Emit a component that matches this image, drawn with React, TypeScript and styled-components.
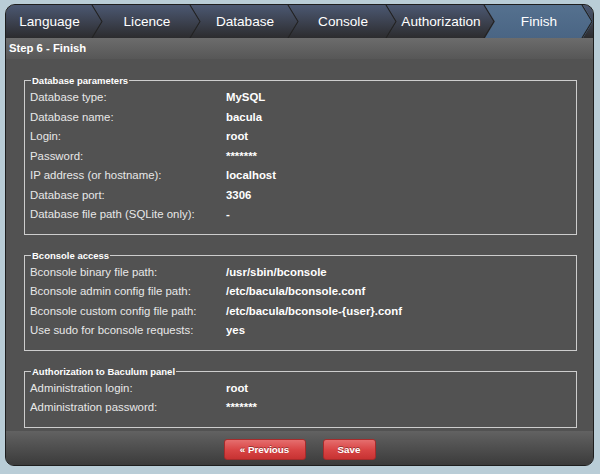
import React from "react";
import styled, { createGlobalStyle, css } from "styled-components";

const Global = createGlobalStyle`
  html, body { margin: 0; padding: 0; background: #b9cdd7; }
  body { font-family: "Liberation Sans", Arial, sans-serif; }
`;

const Page = styled.div`
  padding: 4px 6px 8px 5px;
`;

const Panel = styled.div`
  width: 589px;
  box-sizing: border-box;
  border: 1px solid #1e1e1e;
  border-radius: 10px 10px 9px 9px;
  overflow: hidden;
  background: #525252;
  display: flex;
  flex-direction: column;
`;

const TabBar = styled.div`
  display: flex;
  height: 33px;
  background: linear-gradient(#4b5872, #3b404d 55%, #2c2c2e);
`;

const Tab = styled.div<{ $first?: boolean; $active?: boolean }>`
  position: relative;
  flex: 0 0 ${(p) => (p.$first ? 97 : 108)}px;
  margin-right: -10px;
  box-sizing: border-box;
  padding-right: ${(p) => (p.$first ? 10 : 0)}px;
  display: flex;
  align-items: center;
  justify-content: center;
  color: #fff;
  font-size: 13.6px;
  clip-path: ${(p) =>
    p.$first
      ? "polygon(0 0, calc(100% - 10px) 0, 100% 50%, calc(100% - 10px) 100%, 0 100%)"
      : "polygon(0 0, calc(100% - 10px) 0, 100% 50%, calc(100% - 10px) 100%, 0 100%, 10px 50%)"};
  ${(p) =>
    p.$active &&
    css`
      background: linear-gradient(#55718f, #4a6584);
    `}
`;

const Separator = styled.svg`
  position: absolute;
  right: 0;
  top: 0;
  width: 12px;
  height: 33px;
`;

const StepHeader = styled.div`
  height: 21px;
  line-height: 21px;
  padding-left: 3px;
  background: linear-gradient(#6c6c6c, #575757);
  color: #fff;
  font-weight: bold;
  font-size: 11.3px;
`;

const Content = styled.div`
  padding: 16px 16px 3px 18px;
  display: flex;
  flex-direction: column;
  gap: 15px;
`;

const Fieldset = styled.fieldset`
  margin: 0;
  border: 1px solid #cdcdcd;
  padding: 2px 5px 9px 5px;
  min-width: 0;
`;

const Legend = styled.legend`
  padding: 0 1px;
  margin-left: 1px;
  font-size: 9.5px;
  line-height: 11px;
  font-weight: bold;
  color: #fff;
`;

const Rows = styled.div`
  display: grid;
  grid-template-columns: 196px 1fr;
  line-height: 19.5px;
  font-size: 11.4px;
`;

const Label = styled.div`
  color: #e8e8e8;
`;

const Value = styled.div`
  color: #fff;
  font-weight: bold;
`;

const Footer = styled.div`
  height: 34px;
  box-sizing: border-box;
  padding-top: 8px;
  background: linear-gradient(#626262, #3b3b3b);
  display: flex;
  justify-content: center;
  align-items: flex-start;
  gap: 17px;
`;

const Button = styled.button<{ $w: number }>`
  width: ${(p) => p.$w}px;
  height: 21px;
  padding: 0;
  border: 1px solid #a62b2b;
  border-radius: 3px;
  background: linear-gradient(#e56e6e, #d94646 50%, #c73232);
  color: #fff;
  font-family: "Liberation Sans", Arial, sans-serif;
  font-weight: bold;
  font-size: 9.8px;
  text-shadow: 0 -1px 0 rgba(0, 0, 0, 0.35);
  cursor: pointer;
`;

const tabs = ["Language", "Licence", "Database", "Console", "Authorization", "Finish"];

type Row = [string, string];

const sections: { title: string; rows: Row[] }[] = [
  {
    title: "Database parameters",
    rows: [
      ["Database type:", "MySQL"],
      ["Database name:", "bacula"],
      ["Login:", "root"],
      ["Password:", "*******"],
      ["IP address (or hostname):", "localhost"],
      ["Database port:", "3306"],
      ["Database file path (SQLite only):", "-"],
    ],
  },
  {
    title: "Bconsole access",
    rows: [
      ["Bconsole binary file path:", "/usr/sbin/bconsole"],
      ["Bconsole admin config file path:", "/etc/bacula/bconsole.conf"],
      ["Bconsole custom config file path:", "/etc/bacula/bconsole-{user}.conf"],
      ["Use sudo for bconsole requests:", "yes"],
    ],
  },
  {
    title: "Authorization to Baculum panel",
    rows: [
      ["Administration login:", "root"],
      ["Administration password:", "*******"],
    ],
  },
];

export default function App() {
  return (
    <>
      <Global />
      <Page>
        <Panel>
          <TabBar>
            {tabs.map((t, i) => (
              <Tab key={t} $first={i === 0} $active={i === tabs.length - 1}>
                {t}
                <Separator viewBox="0 0 12 33">
                  <polyline points="1,0 11,16.5 1,33" fill="none" stroke="#232323" strokeWidth="1.2" />
                </Separator>
              </Tab>
            ))}
          </TabBar>
          <StepHeader>Step 6 - Finish</StepHeader>
          <Content>
            {sections.map((s) => (
              <Fieldset key={s.title}>
                <Legend>{s.title}</Legend>
                <Rows>
                  {s.rows.map(([l, v]) => (
                    <React.Fragment key={l}>
                      <Label>{l}</Label>
                      <Value>{v}</Value>
                    </React.Fragment>
                  ))}
                </Rows>
              </Fieldset>
            ))}
          </Content>
          <Footer>
            <Button $w={82}>« Previous</Button>
            <Button $w={53}>Save</Button>
          </Footer>
        </Panel>
      </Page>
    </>
  );
}
